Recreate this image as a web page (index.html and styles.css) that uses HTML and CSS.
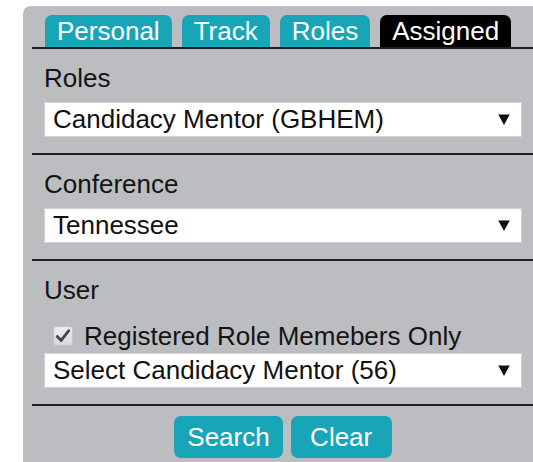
FILE: index.html
```html
<!DOCTYPE html>
<html lang="en">
<head>
<meta charset="utf-8">
<title>Assigned search</title>
<link rel="stylesheet" href="styles.css">
</head>
<body>
  <div class="panel">
    <nav class="tabs">
      <a class="tab" href="#">Personal</a>
      <a class="tab" href="#">Track</a>
      <a class="tab" href="#">Roles</a>
      <a class="tab tab-active" href="#">Assigned</a>
    </nav>

    <section class="field">
      <label class="field-label" for="role">Roles</label>
      <div class="select-wrap">
        <select class="select" id="role">
          <option>Candidacy Mentor (GBHEM)</option>
        </select>
      </div>
    </section>

    <section class="field">
      <label class="field-label" for="conference">Conference</label>
      <div class="select-wrap">
        <select class="select" id="conference">
          <option>Tennessee</option>
        </select>
      </div>
    </section>

    <section class="field">
      <label class="field-label" for="user">User</label>
      <label class="check-row">
        <span class="check-box">
          <svg viewBox="0 0 18 18" width="16" height="16" aria-hidden="true">
            <path d="M2.5 9.5 L7 14 L15.5 3" fill="none" stroke="#474747" stroke-width="3.2" stroke-linecap="round" stroke-linejoin="round"/>
          </svg>
        </span>
        <span class="check-text">Registered Role Memebers Only</span>
      </label>
      <div class="select-wrap select-wrap-tight">
        <select class="select" id="user">
          <option>Select Candidacy Mentor (56)</option>
        </select>
      </div>
    </section>

    <div class="actions">
      <button class="btn" type="button">Search</button>
      <button class="btn" type="button">Clear</button>
    </div>
  </div>
</body>
</html>
```

FILE: styles.css
```css
html, body {
  margin: 0;
  padding: 0;
  background: #ffffff;
}

body {
  font-family: "Liberation Sans", Arial, sans-serif;
  font-size: 26px;
  color: #141414;
}

.panel {
  margin: 6px 0 0 23px;
  padding: 9px 0 0 9px;
  min-height: calc(100vh - 15px);
  background: #bcbdc1;
  border-top-left-radius: 8px;
}

/* tab strip */
.tabs {
  display: flex;
  gap: 10px;
  padding-left: 13px;
  border-bottom: 2px solid #1f1f1f;
}

.tab {
  display: block;
  height: 32px;
  line-height: 32px;
  padding: 0 12px;
  background: #19a5b8;
  color: #ffffff;
  text-decoration: none;
  border-radius: 7px 7px 0 0;
}

.tab-active {
  background: #000000;
}

/* form sections */
.field {
  display: flex;
  flex-direction: column;
  padding: 14px 11px 16px 12px;
  border-bottom: 2px solid #1f1f1f;
}

.field-label {
  line-height: 30px;
  margin-bottom: 9px;
  color: #141414;
}

.select-wrap {
  position: relative;
}

.select-wrap::after {
  content: "";
  position: absolute;
  right: 12px;
  top: 50%;
  width: 12px;
  height: 11px;
  transform: translateY(-50%);
  background: #111111;
  clip-path: polygon(0 0, 100% 0, 50% 100%);
  pointer-events: none;
}

.select {
  display: block;
  width: 100%;
  height: 35px;
  margin: 0;
  padding: 0 0 0 8px;
  border: 1px solid #d2d2d2;
  border-radius: 0;
  background: #ffffff;
  color: #111111;
  font: inherit;
  line-height: 33px;
  -webkit-appearance: none;
  appearance: none;
}

/* checkbox row */
.check-row {
  display: flex;
  align-items: center;
  gap: 11px;
  margin-top: 7px;
  padding-left: 9px;
  line-height: 30px;
}

.check-box {
  display: flex;
  align-items: center;
  justify-content: center;
  width: 18px;
  height: 18px;
  background: linear-gradient(#ececec, #d8d8d8);
  border: 1px solid #c4c4c4;
  border-radius: 3px;
}

.select-wrap-tight {
  margin-top: 2px;
}

/* buttons */
.actions {
  display: flex;
  justify-content: center;
  gap: 8px;
  padding: 10px 11px 0 12px;
}

.btn {
  min-width: 101px;
  height: 42px;
  padding: 0 13px;
  border: none;
  border-radius: 7px;
  background: #19a5b8;
  color: #ffffff;
  font: inherit;
  line-height: 42px;
}
```
